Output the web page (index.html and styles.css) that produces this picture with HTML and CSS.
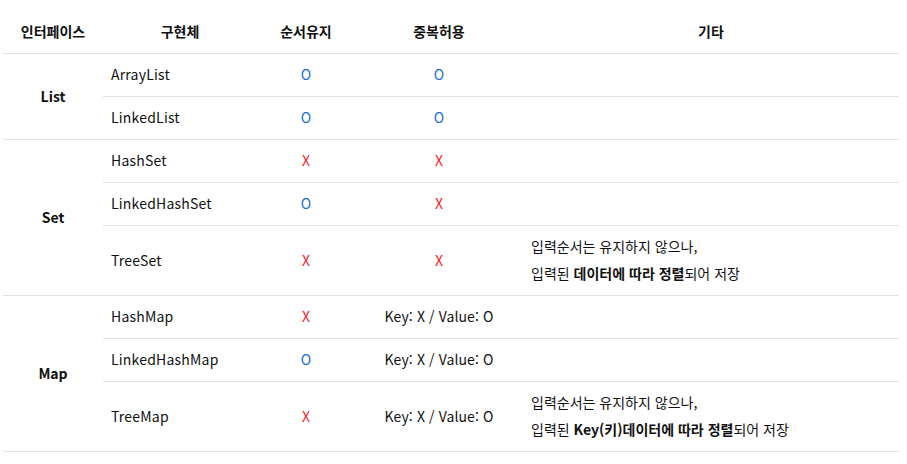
FILE: index.html
```html
<!DOCTYPE html>
<html lang="ko">
<head>
<meta charset="utf-8">
<title>Collection</title>
<link rel="stylesheet" href="styles.css">
</head>
<body>
<table class="ctable">
  <colgroup>
    <col class="c1"><col class="c2"><col class="c3"><col class="c4"><col class="c5">
  </colgroup>
  <thead>
    <tr>
      <th>인터페이스</th><th>구현체</th><th>순서유지</th><th>중복허용</th><th>기타</th>
    </tr>
  </thead>
  <tbody>
    <tr>
      <td class="iface" rowspan="2">List</td>
      <td class="impl">ArrayList</td><td class="mk o">O</td><td class="mk o">O</td><td class="note"></td>
    </tr>
    <tr>
      <td class="impl">LinkedList</td><td class="mk o">O</td><td class="mk o">O</td><td class="note"></td>
    </tr>
    <tr>
      <td class="iface" rowspan="3">Set</td>
      <td class="impl">HashSet</td><td class="mk x">X</td><td class="mk x">X</td><td class="note"></td>
    </tr>
    <tr>
      <td class="impl">LinkedHashSet</td><td class="mk o">O</td><td class="mk x">X</td><td class="note"></td>
    </tr>
    <tr>
      <td class="impl">TreeSet</td><td class="mk x">X</td><td class="mk x">X</td>
      <td class="note">입력순서는 유지하지 않으나,<br>입력된 <b>데이터에 따라 정렬</b>되어 저장</td>
    </tr>
    <tr>
      <td class="iface" rowspan="3">Map</td>
      <td class="impl">HashMap</td><td class="mk x">X</td><td class="mk kv">Key: X / Value: O</td><td class="note"></td>
    </tr>
    <tr>
      <td class="impl">LinkedHashMap</td><td class="mk o">O</td><td class="mk kv">Key: X / Value: O</td><td class="note"></td>
    </tr>
    <tr>
      <td class="impl">TreeMap</td><td class="mk x">X</td><td class="mk kv">Key: X / Value: O</td>
      <td class="note">입력순서는 유지하지 않으나,<br>입력된 <b>Key(키)데이터에 따라 정렬</b>되어 저장</td>
    </tr>
  </tbody>
</table>
</body>
</html>
```

FILE: styles.css
```css
html, body {
  margin: 0;
  padding: 0;
  background: #ffffff;
}
body {
  padding: 11px 0 0 3px;
  font-family: "Noto Sans CJK KR", "Noto Sans", sans-serif;
  font-size: 14px;
  color: #111111;
}
.ctable {
  border-collapse: collapse;
  table-layout: fixed;
  width: 896px;
}
.c1 { width: 100px; }
.c2 { width: 154px; }
.c3 { width: 98px; }
.c4 { width: 168px; }
.c5 { width: 376px; }

.ctable th {
  font-weight: 700;
  text-align: center;
  line-height: 27px;
  padding: 7px 8px 8px;
  border-bottom: 1px solid #e2e2e2;
}
.ctable td {
  line-height: 27px;
  padding: 7px 8px 8px;
  border-bottom: 1px solid #e2e2e2;
  vertical-align: middle;
}
.iface {
  text-align: center;
  font-weight: 700;
}
.impl {
  text-align: left;
  letter-spacing: 0.2px;
}
.mk {
  text-align: center;
}
.o { color: #1a6fd6; }
.x { color: #f5222d; }
.kv { color: #111111; letter-spacing: 0.1px; }
.note {
  text-align: left;
  padding-left: 9px;
}
.note b { font-weight: 700; }
```
